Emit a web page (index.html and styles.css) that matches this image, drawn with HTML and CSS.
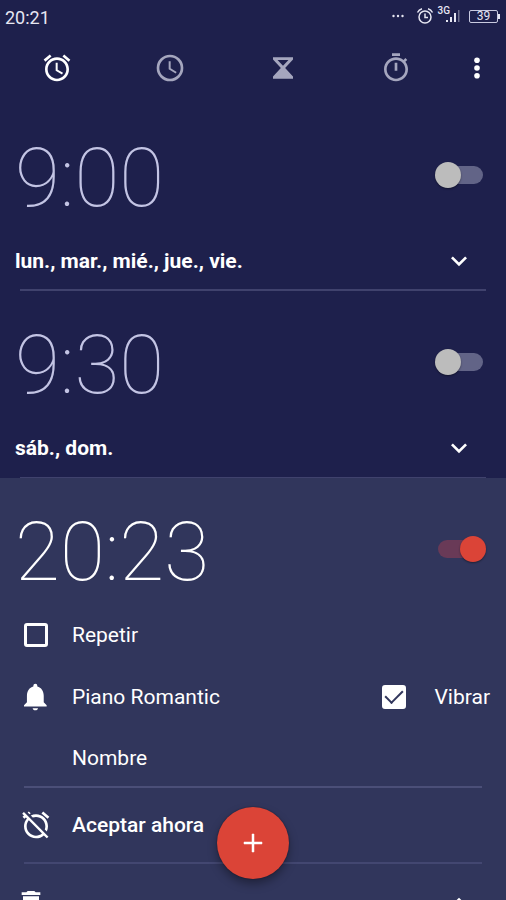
FILE: index.html
```html
<!DOCTYPE html>
<html lang="es">
<head>
<meta charset="utf-8">
<meta name="viewport" content="width=device-width, initial-scale=1">
<title>Reloj</title>
<link rel="stylesheet" href="styles.css">
</head>
<body>
<div class="app">
  <div class="status">
    <span class="status-time">20:21</span>
    <div class="status-icons">
      <svg class="dots" width="12" height="4" viewBox="0 0 12 4" fill="currentColor"><circle cx="1.500" cy="2" r="1.200"/><circle cx="6" cy="2" r="1.200"/><circle cx="10.500" cy="2" r="1.200"/></svg>
      <svg width="18" height="18" viewBox="0 0 18 18" fill="none" stroke="currentColor" stroke-width="1.500"><circle cx="9" cy="10" r="6"/><path d="M9 6.500v4h3M1.500 5.500Q3 2.500 6 1.800M16.500 5.500Q15 2.500 12 1.800"/></svg>
      <div class="signal">
        <span class="network">3G</span>
        <svg width="14" height="14" viewBox="0 0 14 14" fill="currentColor"><path d="M0 11h2v2H0zM4 8h2v5H4zM8 4h2v9H8z"/><path opacity=".4" d="M12 1h1.500v12H12z"/></svg>
      </div>
      <div class="battery"><span>39</span></div>
    </div>
  </div>

  <nav class="tabs" aria-label="Secciones">
    <button class="tab active" aria-label="Alarma"><svg class="icon" viewBox="0 0 24 24"><path d="M22 5.720l-4.600-3.860-1.290 1.530 4.600 3.860L22 5.720zM7.880 3.390L6.600 1.860 2 5.710l1.290 1.530 4.590-3.850zM12.500 8H11v6l4.750 2.850.75-1.230-4-2.370V8zM12 4c-4.970 0-9 4.030-9 9s4.020 9 9 9c4.970 0 9-4.030 9-9s-4.030-9-9-9zm0 16c-3.870 0-7-3.130-7-7s3.130-7 7-7 7 3.130 7 7-3.130 7-7 7z"/></svg></button>
    <button class="tab" aria-label="Reloj"><svg class="icon" viewBox="0 0 24 24"><path d="M12 2a10 10 0 1 0 0 20 10 10 0 0 0 0-20zm0 18a8 8 0 1 1 0-16 8 8 0 0 1 0 16zm.5-13H11v6l5.250 3.150.75-1.230-4.500-2.670z"/></svg></button>
    <button class="tab" aria-label="Temporizador"><svg class="icon" viewBox="0 0 24 24"><path fill-rule="evenodd" d="M4.500 4h15v1.600L13.600 12l5.900 6.400V20h-15v-1.600l5.900-6.400-5.900-6.400zM7.900 6L12 10.300 16.100 6z"/></svg></button>
    <button class="tab" aria-label="Cronómetro"><svg class="icon" viewBox="0 0 24 24"><path d="M15 1H9v2h6V1zm-4 13h2V8h-2v6zm8.030-6.610l1.420-1.420c-.43-.51-.9-.99-1.410-1.410l-1.420 1.420C16.070 4.740 14.120 4 12 4c-4.970 0-9 4.030-9 9s4.020 9 9 9 9-4.030 9-9c0-2.120-.74-4.070-1.970-5.610zM12 20c-3.870 0-7-3.130-7-7s3.130-7 7-7 7 3.130 7 7-3.130 7-7 7z"/></svg></button>
    <button class="overflow" aria-label="Más opciones"><svg class="icon" viewBox="0 0 24 24"><circle cx="12" cy="6.200" r="2.100"/><circle cx="12" cy="12" r="2.100"/><circle cx="12" cy="17.800" r="2.100"/></svg></button>
  </nav>

  <main class="list">
    <section class="alarm">
      <div class="time-row"><button class="time">9:00</button><input class="switch" type="checkbox" role="switch" aria-label="Alarma de las 9:00"></div>
      <div class="days-row"><span>lun., mar., mié., jue., vie.</span><button class="expand" aria-label="Mostrar alarma"><svg class="icon" viewBox="0 0 24 24"><path d="M7.410 8.590L12 13.170l4.590-4.580L18 10l-6 6-6-6z"/></svg></button></div>
    </section>
    <section class="alarm">
      <div class="time-row"><button class="time">9:30</button><input class="switch" type="checkbox" role="switch" aria-label="Alarma de las 9:30"></div>
      <div class="days-row last"><span>sáb., dom.</span><button class="expand" aria-label="Mostrar alarma"><svg class="icon" viewBox="0 0 24 24"><path d="M7.410 8.590L12 13.170l4.590-4.580L18 10l-6 6-6-6z"/></svg></button></div>
    </section>
    <section class="alarm open">
      <div class="time-row"><button class="time">20:23</button><input class="switch" type="checkbox" role="switch" aria-label="Alarma de las 20:23" checked></div>
      <div class="option repeat"><label class="choice"><input class="check" type="checkbox">Repetir</label></div>
      <div class="option">
        <button class="choice"><svg class="icon" viewBox="0 0 24 24"><path d="M11.500 22c1.100 0 2-.7 2-1.600h-4c0 .9.890 1.600 2 1.600zm6.300-6v-5c0-3.370-1.900-6.140-4.800-6.820V3.500a1.500 1.500 0 0 0-3 0v.68C7.100 4.860 5.200 7.630 5.200 11v5L3 18.200v1h17v-1z"/></svg>Piano Romantic</button>
        <label class="choice vibrate"><input class="check" type="checkbox" checked>Vibrar</label>
      </div>
      <div class="option name"><input class="name-input" type="text" placeholder="Nombre" aria-label="Nombre"></div>
      <div class="option dismiss"><button class="choice"><svg class="icon" viewBox="0 0 24 24"><path d="M12 6c3.870 0 7 3.130 7 7 0 .84-.16 1.650-.43 2.400l1.520 1.520c.58-1.190.91-2.510.91-3.920 0-4.970-4.030-9-9-9-1.410 0-2.730.33-3.920.91L9.600 6.430C10.350 6.160 11.160 6 12 6zm10-.28l-4.600-3.860-1.290 1.530 4.600 3.860L22 5.720zM2.920 2.290L1.650 3.570 2.980 4.900l-1.110.93 1.420 1.420 1.110-.94.8.8C3.830 8.690 3 10.750 3 13c0 4.970 4.020 9 9 9 2.250 0 4.310-.83 5.890-2.200l2.200 2.200 1.270-1.270L3.890 3.270l-.97-.98zm13.550 16.100C15.260 19.390 13.700 20 12 20c-3.870 0-7-3.130-7-7 0-1.700.61-3.260 1.610-4.470l9.860 9.860zM8.020 3.280L6.600 1.860l-.86.710 1.420 1.420.86-.71z"/></svg>Aceptar ahora</button></div>
      <div class="footer">
        <button class="delete" aria-label="Eliminar"><svg class="icon" viewBox="0 0 24 24"><path d="M6 19c0 1.100.9 2 2 2h8c1.100 0 2-.9 2-2V7H6v12zM19 4h-3.500l-1-1h-5l-1 1H5v2h14V4z"/></svg></button>
        <button class="expand" aria-label="Ocultar alarma"><svg class="icon" viewBox="0 0 24 24"><path d="M12 8l-6 6 1.410 1.410L12 10.830l4.590 4.580L18 14z"/></svg></button>
      </div>
    </section>
  </main>
  <button class="fab" aria-label="Añadir alarma"><svg width="20" height="20" viewBox="0 0 20 20" fill="currentColor"><path d="M9 1h2v8h8v2h-8v8H9v-8H1V9h8z" stroke="currentColor" stroke-width=".5"/></svg></button>
</div>
</body>
</html>
```
FILE: styles.css
```css
* { box-sizing: border-box; }

body {
  margin: 0;
  background: #1e204c;
  color: #fff;
  font: 21px/24px Roboto, "Liberation Sans", sans-serif;
}

button {
  padding: 0;
  border: 0;
  background: none;
  color: inherit;
  font: inherit;
  cursor: pointer;
}

svg { display: block; flex: none; }
.icon { width: 32px; height: 32px; fill: currentColor; }

.app {
  display: flex;
  flex-direction: column;
  height: 100vh;
  overflow: hidden;
}

.status {
  display: flex;
  flex: none;
  justify-content: space-between;
  align-items: center;
  height: 34px;
  padding: 2px 6px 0 5px;
  color: #e6e6f2;
}
.status-time { font-size: 18px; }
.status-icons { display: flex; align-items: center; padding-bottom: 4px; }
.dots { margin-right: 12px; }
.signal { display: flex; align-items: flex-start; margin: 0 9px 4px 4px; }
.signal svg { margin: 4px 0 0 -4px; }
.network { font-size: 10px; line-height: 12px; font-weight: 500; }
.battery {
  position: relative;
  width: 29px;
  height: 13px;
  border: 1px solid #c9cae0;
  border-radius: 2px;
  margin-right: 2px;
  font-size: 12px;
  line-height: 11px;
  text-align: center;
}
.battery::after {
  content: "";
  position: absolute;
  top: 3px;
  right: -3px;
  width: 2px;
  height: 5px;
  background: #e6e6f2;
}

.tabs { display: flex; flex: none; height: 70px; }
.tab, .overflow { display: flex; align-items: center; justify-content: center; height: 68px; }
.tab { flex: 1; color: #a5a6be; }
.tab.active { color: #fff; }
.overflow { width: 53px; padding-right: 5px; }

.list { flex: 1; min-height: 0; overflow: hidden; }

.alarm { padding-top: 24px; }
.time-row {
  display: flex;
  align-items: center;
  justify-content: space-between;
  height: 100px;
  padding: 0 20px 0 15px;
}
.time { font-size: 82px; line-height: 98px; font-weight: 100; color: #c3c4e4; }
.days-row {
  display: flex;
  align-items: center;
  justify-content: space-between;
  height: 63px;
  padding: 3px 11px 0 15px;
  font-weight: 700;
  background: linear-gradient(#40426d, #40426d) center bottom / calc(100% - 40px) 2px no-repeat;
}
.days-row.last { background-size: calc(100% - 40px) 1px; }
.expand { padding: 0 20px; }

.switch {
  appearance: none;
  position: relative;
  width: 51px;
  height: 26px;
  margin: 0 0 6px;
  cursor: pointer;
}
.switch::before {
  content: "";
  position: absolute;
  inset: 4px 3px;
  border-radius: 9px;
  background: #626487;
}
.switch::after {
  content: "";
  position: absolute;
  top: 0;
  left: 0;
  width: 26px;
  height: 26px;
  border-radius: 50%;
  background: #bcbcbc;
  box-shadow: 0 1px 2px rgba(0, 0, 0, 0.4);
}
.switch:checked::before { background: #693a57; }
.switch:checked::after { left: auto; right: 0; background: #db4437; }

.open { background: #31365c; }
.open .time { color: #fff; }
.option {
  display: flex;
  align-items: center;
  justify-content: space-between;
  min-height: 60px;
  padding: 0 16px 0 20px;
}
.repeat { min-height: 65px; }
.choice { display: flex; align-items: center; gap: 20px; cursor: pointer; }
.vibrate { gap: 24px; }
.check {
  appearance: none;
  display: grid;
  place-items: center;
  width: 24px;
  height: 24px;
  margin: 0 4px;
  border: 3px solid #fff;
  border-radius: 3px;
  cursor: pointer;
}
.check:checked { background: #fff; }
.check:checked::after {
  content: "";
  width: 8px;
  height: 15px;
  margin-top: -5px;
  border: solid #31365c;
  border-width: 0 2px 2px 0;
  transform: rotate(45deg);
}
.name, .dismiss {
  margin: 0 24px;
  padding: 0;
  border-bottom: 2px solid #4b4f78;
}
.name { min-height: 61px; padding-top: 3px; }
.name-input {
  width: 100%;
  padding: 0 0 0 48px;
  border: 0;
  outline: 0;
  background: none;
  color: #fff;
  font: inherit;
}
.name-input::placeholder { color: #fff; opacity: 1; }
.dismiss { min-height: 76px; font-weight: 500; border-bottom-color: #434771; }
.dismiss .choice { margin-left: -4px; }
.footer { display: flex; justify-content: space-between; padding: 23px 11px 22px 15px; }

.fab {
  position: fixed;
  left: calc(50% - 36px);
  bottom: 21px;
  display: grid;
  place-items: center;
  width: 72px;
  height: 72px;
  border-radius: 50%;
  background: #db4437;
  box-shadow: 0 5px 10px rgba(0, 0, 0, 0.35), 0 0 2px rgba(0, 0, 0, 0.4);
}
```
